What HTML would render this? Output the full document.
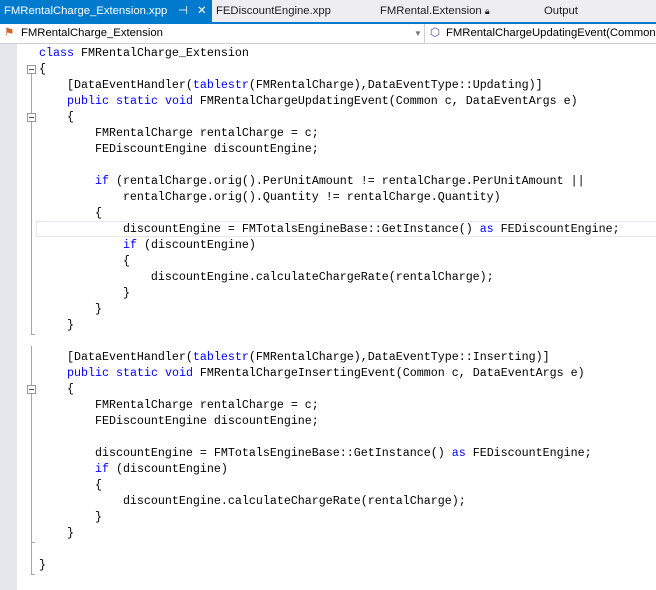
<!DOCTYPE html>
<html><head><style>
body{margin:0;width:656px;height:590px;overflow:hidden;background:#fff;font-family:"Liberation Sans",sans-serif;position:relative}
.tabs{position:absolute;left:0;top:0;width:656px;height:22px;background:#eeeef2;border-bottom:2px solid #007acc;font-size:11.3px;white-space:nowrap}
.tab{position:absolute;top:0;height:22px;line-height:22px;color:#1e1e1e}
.act{left:0;width:212px;background:#007acc;color:#fff;padding-left:4px;box-sizing:border-box}
.nav{position:absolute;left:0;top:24px;width:656px;height:19px;background:#fff;border-bottom:1px solid #ccced8;font-size:11.3px;line-height:19px;white-space:nowrap;overflow:hidden}
.gut{position:absolute;left:0;top:44px;width:17px;height:546px;background:#e6e7ed}
.code{position:absolute;left:39px;top:45px;font-family:"Liberation Mono",monospace;font-size:11.67px;line-height:16px;white-space:pre;color:#000}
.k{color:#0000ff}
.fold{position:absolute;left:27px;width:7px;height:7px;border:1px solid #999;background:#fff}
.fold:after{content:"";position:absolute;left:1px;top:3px;width:5px;height:1px;background:#555}
.vl{position:absolute;left:31px;width:1px;background:#a5a5a5}
</style></head><body>
<div class="tabs">
<div class="tab act">FMRentalCharge_Extension.xpp<span style="position:absolute;left:178px">⊣</span><span style="position:absolute;left:197px">✕</span></div>
<div class="tab" style="left:216px">FEDiscountEngine.xpp</div>
<div class="tab" style="left:380px">FMRental.Extension <span style="font-size:9px">🔒︎</span></div>
<div class="tab" style="left:544px">Output</div>
</div>
<div class="nav">
<span style="position:absolute;left:4px;color:#d0662a">⚑</span>
<span style="position:absolute;left:21px">FMRentalCharge_Extension</span>
<span style="position:absolute;left:414px;color:#777;font-size:8px">▼</span>
<div style="position:absolute;left:424px;top:0;width:1px;height:19px;background:#ccced8"></div>
<span style="position:absolute;left:430px;color:#6b2fa0">⬡</span>
<span style="position:absolute;left:446px">FMRentalChargeUpdatingEvent(Common c, DataEventArgs e)</span>
</div>
<div class="gut"></div>
<div class="vl" style="top:74px;height:243px"></div>
<div class="vl" style="top:122px;height:213px"></div>
<div class="vl" style="top:346px;height:44px"></div>
<div class="vl" style="top:394px;height:148px"></div>
<div class="vl" style="top:542px;height:1px;width:4px"></div>
<div class="vl" style="top:542px;height:32px"></div>
<div class="vl" style="top:574px;height:1px;width:4px"></div>
<div class="vl" style="top:334px;height:1px;width:4px"></div>
<div class="fold" style="top:65px"></div>
<div class="fold" style="top:113px"></div>
<div class="fold" style="top:385px"></div>
<div style="position:absolute;left:36px;top:221px;width:630px;height:14px;border:1px solid #e6e6f0"></div>
<div class="code"><span class="k">class</span> FMRentalCharge_Extension
{
    [DataEventHandler(<span class="k">tablestr</span>(FMRentalCharge),DataEventType::Updating)]
    <span class="k">public</span> <span class="k">static</span> <span class="k">void</span> FMRentalChargeUpdatingEvent(Common c, DataEventArgs e)
    {
        FMRentalCharge rentalCharge = c;
        FEDiscountEngine discountEngine;

        <span class="k">if</span> (rentalCharge.orig().PerUnitAmount != rentalCharge.PerUnitAmount ||
            rentalCharge.orig().Quantity != rentalCharge.Quantity)
        {
            discountEngine = FMTotalsEngineBase::GetInstance() <span class="k">as</span> FEDiscountEngine;
            <span class="k">if</span> (discountEngine)
            {
                discountEngine.calculateChargeRate(rentalCharge);
            }
        }
    }

    [DataEventHandler(<span class="k">tablestr</span>(FMRentalCharge),DataEventType::Inserting)]
    <span class="k">public</span> <span class="k">static</span> <span class="k">void</span> FMRentalChargeInsertingEvent(Common c, DataEventArgs e)
    {
        FMRentalCharge rentalCharge = c;
        FEDiscountEngine discountEngine;

        discountEngine = FMTotalsEngineBase::GetInstance() <span class="k">as</span> FEDiscountEngine;
        <span class="k">if</span> (discountEngine)
        {
            discountEngine.calculateChargeRate(rentalCharge);
        }
    }

}</div>
</body></html>
